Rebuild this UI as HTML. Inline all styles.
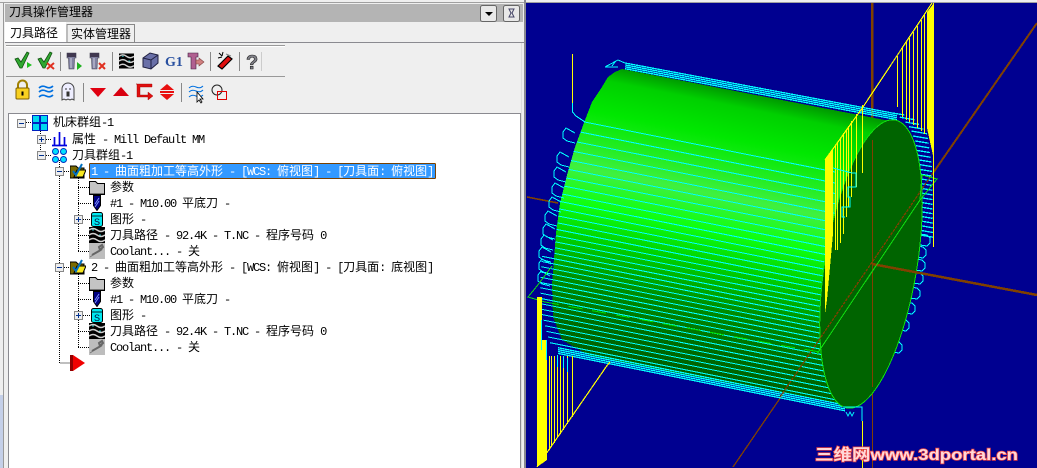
<!DOCTYPE html>
<html><head><meta charset="utf-8"><style>
html,body{margin:0;padding:0;background:#efefef;overflow:hidden}
svg{display:block;position:absolute;left:0;top:0}
.t{font-family:"WenQuanYi Zen Hei","Noto Sans CJK SC",sans-serif;font-size:12px;white-space:pre;fill:#000}
.l{font-family:"Liberation Mono",monospace;font-size:12px;letter-spacing:-1.2px;white-space:pre}
.w{fill:#fff}
</style></head><body>
<svg width="1037" height="468" viewBox="0 0 1037 468" xmlns="http://www.w3.org/2000/svg">
<defs>
<linearGradient id="bg" gradientUnits="userSpaceOnUse" x1="622" y1="69" x2="564.7" y2="355.5">
<stop offset="0" stop-color="#009c00"/><stop offset=".05" stop-color="#00d000"/><stop offset=".16" stop-color="#00e800"/><stop offset=".36" stop-color="#40f040"/><stop offset=".48" stop-color="#10ff10"/><stop offset=".6" stop-color="#00d000"/><stop offset=".74" stop-color="#008c00"/><stop offset=".88" stop-color="#006c00"/><stop offset="1" stop-color="#005c00"/>
</linearGradient>
<symbol id="fo" viewBox="0 0 16 16"><path d="M0 3h6l2 2h6v10H0z" fill="#7a6a00" stroke="#000"/><path d="M4 14l3-7h9l-3 7z" fill="#f8e820" stroke="#000"/><path d="M3 8l3 4 6-11" fill="none" stroke="#0070c0" stroke-width="2"/></symbol>
<symbol id="gf" viewBox="0 0 16 16"><path d="M.5 2.500h6l2 2h7v11H.5z" fill="#c4c4c4" stroke="#000"/><path d="M1 14h14v1H1z" fill="#777"/></symbol>
<symbol id="tl" viewBox="0 0 8 16"><path d="M.5 .5h7v10l-3.500 5-3.500-5z" fill="#000080" stroke="#000"/><path d="M2 9l4-6M2 12l4-6" stroke="#8090ff" fill="none"/></symbol>
<symbol id="sc" viewBox="0 0 12 15"><rect x=".5" y=".5" width="11" height="14" rx="2" fill="#00e8f0" stroke="#000"/><path d="M1 3h10v2H1z" fill="#008890"/><text x="3" y="13" font-family="Liberation Sans" font-size="9" fill="#003">S</text></symbol>
<symbol id="wv" viewBox="0 0 16 16"><rect width="16" height="16" fill="#000"/><path d="M0 3q4-3 8 0t8 0M0 8q4-3 8 0t8 0M0 13q4-3 8 0t8 0" fill="none" stroke="#d0d0d0" stroke-width="1.500"/><path d="M3 3h2M10 8h2" stroke="#30c0c0"/></symbol>
<symbol id="co" viewBox="0 0 16 16"><rect width="16" height="16" fill="#bdbdbd"/><path d="M3 12l7-4 3-2M10 4l3-2 1 2-3 3z" stroke="#666" stroke-width="2" fill="none"/><path d="M1 14l3-2" stroke="#777"/></symbol>
<symbol id="pl" viewBox="0 0 9 9"><rect x=".5" y=".5" width="8" height="8" fill="#eee" stroke="#888"/><path d="M2 4.500h5M4.500 2v5" stroke="#003090"/></symbol>
<symbol id="mi" viewBox="0 0 9 9"><rect x=".5" y=".5" width="8" height="8" fill="#eee" stroke="#888"/><path d="M2 4.500h5" stroke="#003090"/></symbol>
</defs>

<!-- panel chrome -->
<rect width="1037" height="468" fill="#efefef"/>
<rect x="0" y="2" width="1037" height="1" fill="#a0a0a0"/>
<rect x="0" y="395" width="3" height="73" fill="#c4cfe8"/>
<rect x="3" y="3" width="1" height="465" fill="#999"/>
<rect x="5" y="4" width="518" height="18" fill="#b4b4b4"/>
<rect x="5" y="42" width="520" height="1" fill="#8a8a90"/>
<rect x="524" y="0" width="2" height="468" fill="#8a8a90"/>
<rect x="521" y="43" width="1" height="425" fill="#ddd"/>
<path d="M5 22h61v20H5z" fill="#fff"/>
<path d="M67 24.500h67.500V42.500H67z" fill="#efefef" stroke="#888"/>
<text class="t" x="9" y="16" fill="#222">刀具操作管理器</text>
<text class="t" x="10" y="37">刀具路径</text>
<text class="t" x="71" y="38">实体管理器</text>
<rect x="480.500" y="5.500" width="16" height="16" rx="2" fill="#e8e8e8" stroke="#666"/>
<path d="M485 12h8l-4 4z" fill="#000"/>
<rect x="503.500" y="5.500" width="16" height="16" rx="2" fill="#e8e8e8" stroke="#666"/>
<path d="M509 9h5l-2 4 2 4h-5l2-4z" fill="none" stroke="#446" stroke-width="1"/>
<rect x="6" y="45" width="279" height="1" fill="#999"/><rect x="6" y="46" width="279" height="1" fill="#fff"/>
<rect x="6" y="76" width="279" height="1" fill="#999"/>
<g fill="#888"><rect x="60" y="52" width="1" height="19"/><rect x="112" y="52" width="1" height="19"/><rect x="210" y="52" width="1" height="19"/><rect x="239" y="52" width="1" height="19"/><rect x="83" y="83" width="1" height="19"/><rect x="181" y="83" width="1" height="19"/></g>
<rect x="261" y="52" width="1" height="19" fill="#ccc"/>

<!-- toolbar row 1 -->
<g>
<path d="M15 59l3-1 3 4 6-10 2 1-7 15h-2z" fill="#30a830" stroke="#105010" stroke-width=".8"/><path d="M27 62l5 3-5 3z" fill="#20c020"/>
<path d="M38 59l3-1 3 4 6-10 2 1-7 15h-2z" fill="#30a830" stroke="#105010" stroke-width=".8"/><path d="M47 63l7 6M54 63l-7 6" stroke="#e03020" stroke-width="2"/>
<path d="M67 53h9v5h-1.500l-.5 11h-5l-.5-11H67z" fill="#8080a0" stroke="#404050" stroke-width=".6"/><path d="M67 53h9v4h-9z" fill="#403850"/><path d="M71 58v10" stroke="#d0d0e0"/><path d="M77 62l5 4-5 4z" fill="#20b020"/>
<path d="M90 53h9v5h-1.500l-.5 11h-5l-.5-11H90z" fill="#8080a0" stroke="#404050" stroke-width=".6"/><path d="M90 53h9v4h-9z" fill="#403850"/><path d="M94 58v10" stroke="#d0d0e0"/><path d="M99 63l6 6M105 63l-6 6" stroke="#e03020" stroke-width="2"/>
<use href="#wv" x="119" y="53" width="15" height="16"/>
<path d="M143 58l7-5 8 2v8l-7 6-8-2z" fill="#6a70a8" stroke="#202040"/><path d="M143 58l8 2 7-5M151 60v9" fill="none" stroke="#202040"/>
<text x="165" y="66" font-family="Liberation Serif" font-weight="bold" font-size="14" fill="#2850a0">G1</text>
<path d="M188 53h10v4h-2v12h-5v-12h-3z" fill="#b06090" stroke="#402040" stroke-width=".6"/><path d="M196 60h3v-2l5 4-5 4v-2h-3z" fill="#d08080" stroke="#804040" stroke-width=".6"/>
<path d="M218 66l10-10 4 3-10 10z" fill="#e01010" stroke="#000" stroke-width="1.200"/><path d="M219 53l3 3M223 52l-1 4M218 58l4-1" stroke="#000"/><path d="M226 54l5 2" stroke="#888"/>
<text x="246" y="69" font-family="Liberation Sans" font-weight="bold" font-size="20" fill="#808088" stroke="#222" stroke-width=".6">?</text>
</g>
<!-- toolbar row 2 -->
<g>
<path d="M18 88v-3a4.500 4.500 0 0 1 9 0v3" fill="none" stroke="#a08000" stroke-width="2"/><rect x="16" y="88" width="13" height="11" rx="1" fill="#f8d020" stroke="#806000"/><path d="M22.500 91.500v4" stroke="#000" stroke-width="2"/>
<path d="M39 88q3-3 7-1t7-1M39 92q3-3 7-1t7-1M39 97q3-3 7-1t7-1" fill="none" stroke="#0070e0" stroke-width="1.600"/>
<path d="M62 100v-11a6 6 0 0 1 12 0v11l-2-1-2 1-2-1-2 1-2-1z" fill="#eef" stroke="#444"/><path d="M65 89h2M69 89h2M67 92h2v4h-2z" fill="#333" stroke="#333"/>
<path d="M90 88h16l-8 9z" fill="#e00010"/>
<path d="M113 96h16l-8-9z" fill="#d80010"/>
<path d="M136 84h16v3h-12v8h8v-3l5 4-5 4v-3h-11v-13z" fill="#e01010" stroke="#900" stroke-width=".4"/>
<path d="M160 90l7-6 7 6zM160 94l7 6 7-6z" fill="#e81010"/><rect x="160" y="91" width="14" height="2" fill="#e81010"/>
<path d="M189 88q3-3 7-1t7-1M189 92q3-3 7-1t7-1M189 97q3-3 7-1t7-1" fill="none" stroke="#0070e0"/>
<path d="M197 92v10l2-2 2 3 1-1-2-3h3z" fill="#fff" stroke="#000" stroke-width=".8"/>
<circle cx="217" cy="90" r="5" fill="none" stroke="#222"/><rect x="217.500" y="91.500" width="9" height="8" fill="none" stroke="#e00000"/>
</g>

<!-- tree -->
<rect x="8.500" y="113.500" width="512" height="360" fill="#fff" stroke="#8a8a90"/>
<g stroke="#000" stroke-dasharray="1 1" fill="none">
<path d="M40.500 129V155M59.500 160V363H70M78.500 176V251M78.500 272V347M26 122.500h6M46 139.500h6M46 155.500h6M64 171.500h6M64 267.500h6M78 187.500h11M78 203.500h13M83 219.500h8M78 235.500h11M78 251.500h11M78 283.500h11M78 299.500h13M83 315.500h8M78 331.500h11M78 347.500h11"/>
</g>
<use href="#mi" x="17" y="119" width="9" height="9"/>
<use href="#pl" x="37" y="135" width="9" height="9"/>
<use href="#mi" x="37" y="151" width="9" height="9"/>
<use href="#mi" x="55" y="167" width="9" height="9"/>
<use href="#pl" x="74" y="215" width="9" height="9"/>
<use href="#mi" x="55" y="263" width="9" height="9"/>
<use href="#pl" x="74" y="311" width="9" height="9"/>
<g fill="#00d8f0" stroke="#0020c0"><rect x="32.500" y="115.500" width="7" height="7"/><rect x="40.500" y="115.500" width="7" height="7"/><rect x="32.500" y="123.500" width="7" height="7"/><rect x="40.500" y="123.500" width="7" height="7"/></g>
<path d="M52 145.500h15M54.500 145V137M59.500 145V132M64.500 145V137" stroke="#0000e0" stroke-width="1.700" fill="none"/>
<g fill="#00e0ff" stroke="#0030c0"><circle cx="55.500" cy="151.500" r="3"/><circle cx="63.500" cy="151.500" r="3"/><circle cx="55.500" cy="159.500" r="3"/><circle cx="63.500" cy="159.500" r="3"/></g>
<use href="#fo" x="70" y="163" width="16" height="16"/>
<use href="#fo" x="70" y="259" width="16" height="16"/>

<rect x="89.500" y="163.500" width="346" height="15" fill="#3399ff" stroke="#000" stroke-dasharray="1 1"/>
<rect x="89.500" y="163.500" width="346" height="15" fill="none" stroke="#f08000" stroke-dasharray="1 1" stroke-dashoffset="1"/>

<text class="t" x="53" y="126">机床群组<tspan class="l">-1</tspan></text>
<text class="t" x="72" y="143">属性<tspan class="l"> - Mill Default MM</tspan></text>
<text class="t" x="72" y="159">刀具群组<tspan class="l">-1</tspan></text>
<text class="t w" x="91" y="175"><tspan class="l w">1 - </tspan>曲面粗加工等高外形<tspan class="l w"> - [WCS: </tspan>俯视图<tspan class="l w">] - [</tspan>刀具面<tspan class="l w">: </tspan>俯视图<tspan class="l w">]</tspan></text>
<use href="#gf" x="89" y="179" width="16" height="16"/><text class="t" x="110" y="191">参数</text>
<use href="#tl" x="93" y="195" width="8" height="16"/><text class="t" x="110" y="207"><tspan class="l">#1 - M10.00 </tspan>平底刀<tspan class="l"> -</tspan></text>
<use href="#sc" x="91" y="212" width="12" height="15"/><text class="t" x="110" y="223">图形<tspan class="l"> -</tspan></text>
<use href="#wv" x="89" y="227" width="16" height="16"/><text class="t" x="110" y="239">刀具路径<tspan class="l"> - 92.4K - T.NC - </tspan>程序号码<tspan class="l"> 0</tspan></text>
<use href="#co" x="89" y="243" width="16" height="16"/><text class="t" x="110" y="255"><tspan class="l">Coolant... - </tspan>关</text>
<text class="t" x="91" y="271"><tspan class="l">2 - </tspan>曲面粗加工等高外形<tspan class="l"> - [WCS: </tspan>俯视图<tspan class="l">] - [</tspan>刀具面<tspan class="l">: </tspan>底视图<tspan class="l">]</tspan></text>
<use href="#gf" x="89" y="275" width="16" height="16"/><text class="t" x="110" y="287">参数</text>
<use href="#tl" x="93" y="291" width="8" height="16"/><text class="t" x="110" y="303"><tspan class="l">#1 - M10.00 </tspan>平底刀<tspan class="l"> -</tspan></text>
<use href="#sc" x="91" y="308" width="12" height="15"/><text class="t" x="110" y="319">图形<tspan class="l"> -</tspan></text>
<use href="#wv" x="89" y="323" width="16" height="16"/><text class="t" x="110" y="335">刀具路径<tspan class="l"> - 92.4K - T.NC - </tspan>程序号码<tspan class="l"> 0</tspan></text>
<use href="#co" x="89" y="339" width="16" height="16"/><text class="t" x="110" y="351"><tspan class="l">Coolant... - </tspan>关</text>
<path d="M70 355h3v16h-3z" fill="#900000"/><path d="M73 355l12 8-12 8z" fill="#f00000"/>

<!-- viewport -->
<rect x="526" y="3" width="511" height="465" fill="#000090"/>
<g shape-rendering="crispEdges" id="cad" fill="none">
<g stroke="#804000">
<path d="M872 3V140" stroke-width="2.500"/>
<path d="M527 197L558 203" stroke-width="1.600"/>
<path d="M1037 23L933 173" stroke-width="2"/>
<path d="M785 391L733 467" stroke-width="1.300"/>
<path d="M872.500 387V468"/>
</g>
<path id="body" fill="url(#bg)" d="M622 69L615 72 608 77 602 87 592 102 585 120 575 147 567 175 560 203 556 233 552 284 553 317 562 340 590 356 848 406 860 300 895 122z"/>
<g id="lines" stroke="#00ffff"></g>
<g id="hooks" stroke="#00ffff"></g>
<g id="bands" stroke="#00ffff" stroke-width="1.300"></g>
<ellipse cx="871" cy="264" rx="46" ry="146" transform="rotate(9.4 871 264)" style="fill:#006400;fill-opacity:1" stroke="#10e010"/>
<g stroke="#804000">
<path d="M872.500 140V387"/>
<path d="M872 264L1037 295" stroke-width="2.500"/>
<path d="M933 173L780 397" stroke-dasharray="3 1" stroke-width="1.300"/>
</g>
<g stroke="#10e010">
<path d="M922 175L937 179 920 200 817 354"/>
<path d="M922 175L920 200"/>
<path d="M552 266L537 286 528 297 545 302" stroke-width="1"/>
<path d="M545 302L785 346 820 352" stroke-dasharray="14 10" stroke="#00e000"/>
</g>
<g id="yel" stroke="#ffff00" stroke-width="1.200">
<path d="M572.500 54V103"/>
<path d="M862.500 421V468"/>
<path d="M933.500 3V247"/>
</g>
<path fill="#ffff00" d="M934 3L927 12V128L934 160zM825 160L833 148V234L830 267 827 300 825 314zM537 297H542V340H547V460L537 467z"/>
<path stroke="#00ffff" d="M572.500 103V112L576 116 585 122M833 168L852 173H856V187H848V197H850V207H842V217H845M843 407H862V421M846 412L848 416 850 412 852 416 854 412M605 67L618 60 625 63M605 67H618M612 66L615 62M541.500 320V350M546.500 340V360M557.500 355V367M563.500 356V368M567.500 358V372"/>
</g>
<text x="815" y="460" font-family="Liberation Sans,'Noto Sans CJK SC',sans-serif" font-weight="bold" font-size="16" fill="#ffd8d8" stroke="#e84040" stroke-width="1.400" paint-order="stroke" textLength="203" lengthAdjust="spacingAndGlyphs">三维网www.3dportal.cn</text>
</svg>
<script>
(function(){
var NS='http://www.w3.org/2000/svg';
function add(id,d){var p=document.createElementNS(NS,'path');p.setAttribute('d',d);document.getElementById(id).appendChild(p);}
var L=[[622,69],[615,72],[608,77],[602,87],[592,102],[585,120],[575,147],[567,175],[560,203],[556,233],[552,284],[553,317],[558,344],[568,356],[590,362]];
function yp(p){return p[1]-.2*(p[0]-622);}
function lx(v){for(var i=0;i<L.length-1;i++){var a=yp(L[i]),b=yp(L[i+1]);if(v>=a&&v<=b){return L[i][0]+(L[i+1][0]-L[i][0])*(v-a)/(b-a);}}return 590;}
var v=129.4,d='';
while(v<361){
 var x=lx(v);
 if(v>270){x=x-Math.max(0,12-Math.max(0,v-320)*.1);}
 var y=v+.2*(x-622);
 d+='M'+x.toFixed(1)+' '+y.toFixed(1)+'L835 '+(v+.2*213).toFixed(1);
 v+=Math.max(5.3,11-(v-129)*.04);
}
add('lines',d);
var h='';
[[563,128],[557,152],[554,167],[552,183],[549,197],[545,211],[543,224],[541,235],[539,247],[539,259],[538,271]].forEach(function(a){var X=a[0],Y=a[1];
 h+='M'+(X+12)+' '+(Y+5)+'L'+(X+3)+' '+Y+'L'+X+' '+(Y+4)+'V'+(Y+10)+'L'+(X+4)+' '+(Y+13)+'L'+(X+12)+' '+(Y+15);});
add('hooks',h);
var b='',i;
// top band
for(i=0;i<=5.7;i+=1.9){b+='M625 '+(63+i).toFixed(1)+'L897 '+(63+i+.187*272).toFixed(1);}
// bottom band
[360.5,362.4,364.3,366.2].forEach(function(o){b+='M558 '+(o+.2*(558-622)).toFixed(1)+'L845 '+(o+.2*223).toFixed(1);});
add('bands',b);
// right band stripes
var O=[[897,113],[912,117],[927,133],[932,167],[933,240]];
function ox(y){for(var k=0;k<O.length-1;k++){if(y>=O[k][1]&&y<=O[k+1][1])return O[k][0]+(O[k+1][0]-O[k][0])*(y-O[k][1])/(O[k+1][1]-O[k][1]);}return 933;}
var r='';
for(var yy=115;yy<238;yy+=4.7){var xo=ox(yy);var t=(yy-264)/146;var e=871-(yy-264)*.165+46*Math.sqrt(Math.max(0,1-t*t));r+='M'+(e-2).toFixed(1)+' '+(yy-(xo-e)*.2).toFixed(1)+'L'+xo.toFixed(1)+' '+yy.toFixed(1);}
add('bands',r);
// right hooks
var q='';
[[920,234,930],[918,246,926],[916,259,925],[913,272,923],[910,287,920],[905,302,915],[900,319,909],[893,341,902]].forEach(function(a){q+='M'+a[0]+' '+a[1]+'L'+(a[2]-3)+' '+(a[1]+1)+'L'+a[2]+' '+(a[1]+4)+'V'+(a[1]+9)+'L'+(a[2]-3)+' '+(a[1]+12)+'L'+(a[2]-10)+' '+(a[1]+11);});
add('hooks',q);
// yellow stripes
var s='';
[[897,107],[902,117],[906,120],[909,122],[913,125],[917,128],[921,131],[924,134]].forEach(function(a){s+='M'+(a[0]+.5)+' '+(3+(932-a[0])*1.507).toFixed(0)+'V'+a[1];});
[[835,250],[837,250],[840,243],[843,234],[846,217],[848,207],[851,197],[856,187],[862,173]].forEach(function(a){s+='M'+(a[0]+.5)+' '+(160-(a[0]-825)*1.5).toFixed(0)+'V'+a[1];});
[549,551,554,557,560,563,567,572].forEach(function(x){s+='M'+(x+.5)+' 356V'+(467-(x-537)*1.43).toFixed(0);});
s+='M537 467L606 367M932 3L863 107 825 160M606 367L610 362';
add('yel',s);
})();
</script>
</body></html>
